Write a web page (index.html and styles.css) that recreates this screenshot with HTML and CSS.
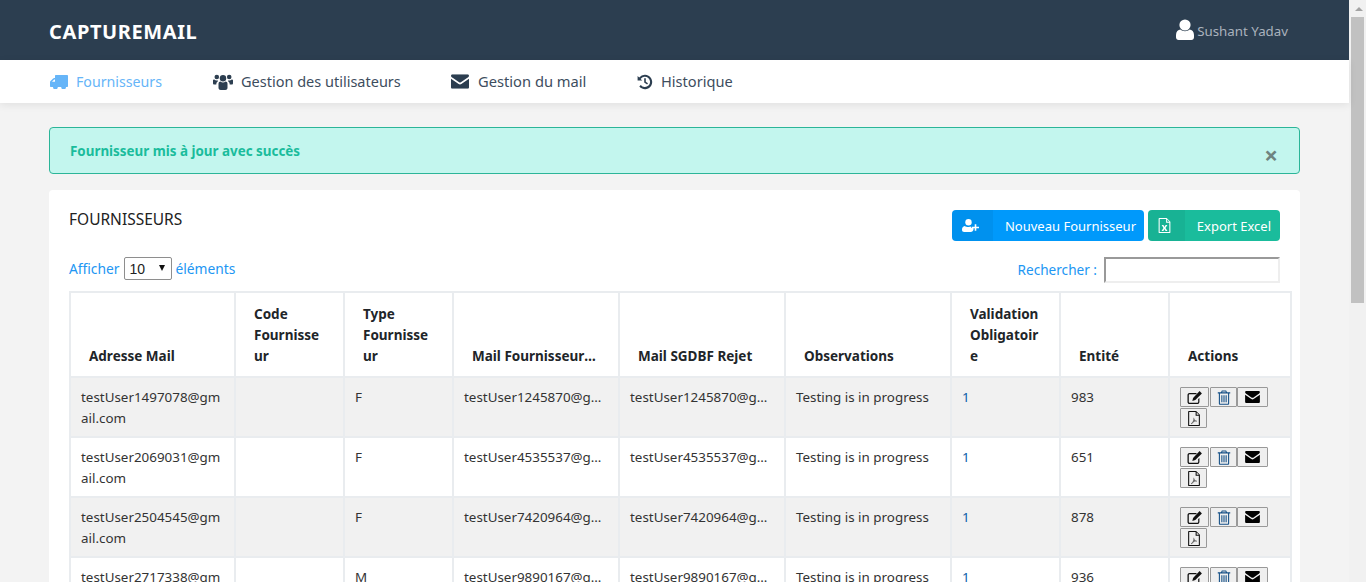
FILE: index.html
```html
<!DOCTYPE html>
<html lang="fr">
<head>
    <meta charset="UTF-8">
    <meta name="viewport" content="width=device-width, initial-scale=1.0">
    <title>CaptureMail</title>
    <link rel="stylesheet" href="styles.css">
</head>
<body>
    <svg class="icon-defs" width="0" height="0">
        <defs>
            <symbol id="i-edit" viewBox="0 0 16 14"><path d="M2.5 2.5h7.5l-1.2 1.2H2.8c-.6 0-1 .4-1 1v6.6c0 .6.4 1 1 1h7.4c.6 0 1-.4 1-1V8.6l1.2-1.2v4c0 1.2-1 2.1-2.1 2.1H2.6c-1.200 0-2.100-.9-2.100-2.100V4.600c0-1.200.9-2.100 2-2.100z"/><path d="M12.600.6l2.300 2.300-6.600 6.700-3 .8.800-3z"/></symbol>
            <symbol id="i-trash" viewBox="0 0 12 14"><path d="M4 .5h4l.8 1.700h3v1.100h-1v9.200c0 .8-.5 1.300-1.100 1.300H2.300c-.6 0-1.100-.5-1.100-1.300V3.300h-1V2.200h3zM4.600 1.500l-.4.7h3.600l-.4-.7zM2.200 3.300v9.200c0 .2.100.4.200.4h7.200c.1 0 .2-.2.2-.4V3.300z"/><path d="M3.500 5h1v6.500h-1zM5.500 5h1v6.500h-1zM7.500 5h1v6.500h-1z"/></symbol>
            <symbol id="i-mail" viewBox="0 0 16 13"><path d="M1.400 0h13.200C15.400 0 16 .6 16 1.400c0 .6-.4 1.100-.8 1.400L8.800 7.200c-.5.300-1.100.300-1.600 0L.8 2.800C.4 2.500 0 2 0 1.400 0 .6.600 0 1.400 0z"/><path d="M0 4.100l6.800 4.600c.7.500 1.700.500 2.400 0L16 4.100v7.500c0 .8-.6 1.400-1.400 1.400H1.400C.6 13 0 12.400 0 11.600z"/></symbol>
            <symbol id="i-pdf" viewBox="0 0 12 14"><path fill-rule="evenodd" d="M.5 0H8l3.500 3.500v9.700c0 .5-.3.800-.8.800H1.300c-.5 0-.8-.3-.8-.8V.8C.5.300.8 0 1.300 0zM1.500 1v12h9V4.500H7.500V1zM8.500 1.300v2.200h2.100z"/><path d="M6 6.200c.4 1.700 1.100 2.700 2.800 3l-.1.800c-1-.2-1.900-.1-2.900.3-.7 1-1.300 1.600-2.300 2l-.4-.6c.8-.5 1.500-1.300 2-2.400.4-1 .5-2 .4-3z" fill-opacity=".6"/></symbol>
        </defs>
    </svg>

    <div class="window">
        <div class="page">
            <header class="topbar">
                <div class="brand">CAPTUREMAIL</div>
                <div class="user">
                    <svg class="user-icon" viewBox="0 0 18 21"><circle cx="9" cy="6" r="5.600" fill="#fff"/><path d="M4.500 10.500c1 1 2.800 1.700 4.500 1.700s3.500-.7 4.500-1.700c2.500.3 4.500 2 4.500 5.500v2.300c0 1.500-1 2.700-2.700 2.700H2.700C1 21 0 19.800 0 18.300V16c0-3.500 2-5.200 4.500-5.500z" fill="#fff"/></svg>
                    <span>Sushant Yadav</span>
                </div>
            </header>

            <nav class="menu">
                <a class="menu-item active">
                    <svg class="menu-icon" viewBox="0 0 18 14"><path d="M6 0h11c.6 0 1 .4 1 1v10c0 .6-.4 1-1 1h-1a2.400 2.400 0 0 1-4.800 0H7.800A2.400 2.400 0 0 1 3 12H1c-.6 0-1-.4-1-1V7.200c0-.4.200-.8.500-1.100l2.600-2.600c.3-.3.700-.5 1.100-.5H5V1c0-.6.400-1 1-1zM2 6.800h3V4.600H4.200z"/><circle cx="5.400" cy="12" r="1.400"/><circle cx="13.600" cy="12" r="1.400"/></svg>
                    Fournisseurs
                </a>
                <a class="menu-item">
                    <svg class="menu-icon users" viewBox="0 0 20 16"><circle cx="10" cy="4.200" r="3.200"/><circle cx="3.800" cy="3" r="2.300"/><circle cx="16.200" cy="3" r="2.300"/><path d="M5.500 9.800C5.500 8.400 6.500 7.600 7.500 7.600c.7.600 1.500.9 2.500.9s1.800-.3 2.500-.9c1 0 2 .8 2 2.200v4c0 1.400-1 2.200-2.200 2.200H7.700c-1.200 0-2.200-.8-2.200-2.200z"/><path d="M0 6.500C0 5.800.5 5.500 1.300 5.500c.6.600 1.500.9 2.500.9.500 0 .9 0 1.300-.2-.3.500-.4 1-.5 1.500-1 .5-1.300 1.500-1.300 2.900H1.200C.500 10.600 0 10 0 9.300zM20 6.500c0-.7-.5-1-1.300-1-.6.600-1.500.9-2.500.9-.5 0-.9 0-1.300-.2.300.5.400 1 .5 1.500 1 .5 1.300 1.500 1.300 2.900h2.100c.7 0 1.200-.6 1.200-1.300z"/></svg>
                    Gestion des utilisateurs
                </a>
                <a class="menu-item">
                    <svg class="menu-icon mail" viewBox="0 0 16 13"><use href="#i-mail"/></svg>
                    Gestion du mail
                </a>
                <a class="menu-item">
                    <svg class="menu-icon history" viewBox="0 0 16 16"><path d="M8 .8a7.200 7.200 0 1 1-5.700 11.600l1.500-1.300A5.200 5.200 0 1 0 3.600 4.900L5.300 6.600H.6V1.900l1.600 1.600A7.200 7.200 0 0 1 8 .8z"/><path d="M7.200 4.300h1.600v3.400l2.200 1.600-.9 1.200-2.900-2.100z"/></svg>
                    Historique
                </a>
            </nav>

            <main class="content">
                <div class="alert">
                    <span>Fournisseur mis à jour avec succès</span>
                    <span class="alert-close">×</span>
                </div>

                <section class="card">
                    <div class="card-head">
                        <h2>FOURNISSEURS</h2>
                        <div class="card-actions">
                            <button class="btn btn-blue">
                                <span class="btn-icon"><svg width="17" height="13" viewBox="0 0 17 13" fill="#fff"><circle cx="6.500" cy="3.300" r="3.200"/><path d="M2.700 7c1 .6 2.400 1 3.800 1 1.200 0 2-.2 2.700-.5v1.300h2.300v1.800c-.3 1.400-1.300 2.400-2.700 2.400H2.200C.8 13 0 12 0 10.700 0 8.800 1 7.400 2.700 7z"/><path d="M12.700 5.200h1.600v2.500H17v1.600h-2.700v2.500h-1.600V9.300H10V7.700h2.700z"/></svg></span>
                                <span class="btn-label">Nouveau Fournisseur</span>
                            </button>
                            <button class="btn btn-green">
                                <span class="btn-icon"><svg width="13" height="15" viewBox="0 0 12 14" fill="#fff"><path fill-rule="evenodd" d="M.5 0H8l3.500 3.500v9.700c0 .5-.3.800-.8.800H1.300c-.5 0-.8-.3-.8-.8V.8C.5.300.8 0 1.300 0zM1.500 1v12h9V4.500H7.500V1zM8.500 1.300v2.200h2.100z"/><path d="M3.300 6.500h1.700L6 8.300l1-1.800h1.700L6.900 9.300l1.900 2.900H7L6 10.300l-1 1.900H3.200l1.900-2.900z"/></svg></span>
                                <span class="btn-label">Export Excel</span>
                            </button>
                        </div>
                    </div>

                    <div class="table-tools">
                        <label class="length">Afficher
                            <span class="fake-select">10<i class="caret"></i></span>
                            éléments</label>
                        <label class="search">Rechercher :
                            <input type="text" class="search-input">
                        </label>
                    </div>

                    <table class="grid">
                        <colgroup>
                            <col class="c-mail"><col class="c-code"><col class="c-type"><col class="c-long"><col class="c-long"><col class="c-long"><col class="c-valid"><col class="c-ent"><col class="c-act">
                        </colgroup>
                        <thead>
                            <tr>
                                <th>Adresse Mail</th>
                                <th>Code Fournisseur</th>
                                <th>Type Fournisseur</th>
                                <th class="cut">Mail FournisseurRejet</th>
                                <th class="cut">Mail SGDBF Rejet</th>
                                <th>Observations</th>
                                <th>Validation Obligatoire</th>
                                <th>Entité</th>
                                <th>Actions</th>
                            </tr>
                        </thead>
                        <tbody>
                            <tr>
                                <td>testUser1497078@gmail.com</td><td></td><td>F</td>
                                <td class="cut">testUser1245870@gmail.com</td><td class="cut">testUser1245870@gmail.com</td>
                                <td>Testing is in progress</td><td class="link">1</td><td>983</td>
                                <td class="actions">
                                    <button class="act a-edit"><svg><use href="#i-edit"/></svg></button><button class="act a-trash"><svg><use href="#i-trash"/></svg></button><button class="act a-mail"><svg><use href="#i-mail"/></svg></button><button class="act a-pdf"><svg><use href="#i-pdf"/></svg></button>
                                </td>
                            </tr>
                            <tr>
                                <td>testUser2069031@gmail.com</td><td></td><td>F</td>
                                <td class="cut">testUser4535537@gmail.com</td><td class="cut">testUser4535537@gmail.com</td>
                                <td>Testing is in progress</td><td class="link">1</td><td>651</td>
                                <td class="actions">
                                    <button class="act a-edit"><svg><use href="#i-edit"/></svg></button><button class="act a-trash"><svg><use href="#i-trash"/></svg></button><button class="act a-mail"><svg><use href="#i-mail"/></svg></button><button class="act a-pdf"><svg><use href="#i-pdf"/></svg></button>
                                </td>
                            </tr>
                            <tr>
                                <td>testUser2504545@gmail.com</td><td></td><td>F</td>
                                <td class="cut">testUser7420964@gmail.com</td><td class="cut">testUser7420964@gmail.com</td>
                                <td>Testing is in progress</td><td class="link">1</td><td>878</td>
                                <td class="actions">
                                    <button class="act a-edit"><svg><use href="#i-edit"/></svg></button><button class="act a-trash"><svg><use href="#i-trash"/></svg></button><button class="act a-mail"><svg><use href="#i-mail"/></svg></button><button class="act a-pdf"><svg><use href="#i-pdf"/></svg></button>
                                </td>
                            </tr>
                            <tr>
                                <td>testUser2717338@gmail.com</td><td></td><td>M</td>
                                <td class="cut">testUser9890167@gmail.com</td><td class="cut">testUser9890167@gmail.com</td>
                                <td>Testing is in progress</td><td class="link">1</td><td>936</td>
                                <td class="actions">
                                    <button class="act a-edit"><svg><use href="#i-edit"/></svg></button><button class="act a-trash"><svg><use href="#i-trash"/></svg></button><button class="act a-mail"><svg><use href="#i-mail"/></svg></button><button class="act a-pdf"><svg><use href="#i-pdf"/></svg></button>
                                </td>
                            </tr>
                        </tbody>
                    </table>
                </section>
            </main>
        </div>

        <div class="scrollbar">
            <div class="scroll-up"></div>
            <div class="scroll-thumb"></div>
        </div>
    </div>
</body>
</html>
```

FILE: styles.css
```css
* {
    box-sizing: border-box;
}
html, body {
    margin: 0;
    padding: 0;
    height: 100%;
    overflow: hidden;
}
body {
    font-family: "Noto Sans", "Open Sans", sans-serif;
    font-size: 13.5px;
    line-height: 21px;
    color: #2c3e50;
    background-color: #f3f3f3;
}
.icon-defs {
    display: block;
    height: 0;
}
.window {
    display: flex;
    height: 582px;
    overflow: hidden;
}
.page {
    width: 1349px;
    flex: none;
}

/* top bar */
.topbar {
    height: 60px;
    background-color: #2c3e50;
    display: flex;
    align-items: center;
    justify-content: space-between;
    padding: 0 61px 0 49px;
}
.brand {
    color: #fff;
    font-size: 20px;
    font-weight: 700;
    letter-spacing: .6px;
    padding-top: 2px;
}
.user {
    display: flex;
    align-items: flex-end;
    gap: 3px;
    color: #aab2bd;
    font-size: 13.3px;
}
.user-icon {
    width: 18px;
    height: 21px;
    margin-bottom: 2px;
}

/* menu */
.menu {
    height: 43px;
    background-color: #fff;
    display: flex;
    align-items: center;
    padding-left: 50px;
    box-shadow: 0 2px 8px rgba(0, 0, 0, .08);
    position: relative;
}
.menu-item {
    display: flex;
    align-items: center;
    font-size: 14.5px;
    color: #3d4d5e;
}
.menu-item:nth-child(1) {
    width: 163px;
    font-size: 14.2px;
}
.menu-item:nth-child(2) {
    width: 238px;
}
.menu-item:nth-child(3) {
    width: 186px;
    font-size: 14.7px;
}
.menu-item:nth-child(4) {
    font-size: 14.6px;
}
.menu-item.active {
    color: #66b5f8;
}
.menu-icon {
    width: 18px;
    height: 14px;
    margin-right: 8px;
    fill: #2c3e50;
}
.menu-item.active .menu-icon {
    fill: #66b5f8;
}
.menu-icon.users {
    width: 20px;
    height: 18px;
}
.menu-icon.mail {
    width: 18px;
    height: 15px;
    margin-right: 9px;
}
.menu-icon.history {
    width: 16px;
    height: 16px;
}

/* content */
.content {
    padding: 24px 49px 0;
}
.alert {
    height: 47px;
    background-color: #c3f6ee;
    border: 1px solid #2bb598;
    border-radius: 4px;
    padding: 13px 20px;
    display: flex;
    justify-content: space-between;
    color: #1abc9c;
    font-size: 13.4px;
    font-weight: 700;
}
.alert-close {
    font-size: 24px;
    font-weight: 700;
    color: #6f8480;
    margin-top: 3px;
    margin-right: 1px;
}
.card {
    margin-top: 16px;
    background-color: #fff;
    border-radius: 4px;
    padding: 20px;
}
.card-head {
    display: flex;
    justify-content: space-between;
    height: 47px;
}
.card-head h2 {
    margin: 0;
    font-size: 15.5px;
    font-weight: 400;
    line-height: 19px;
    color: #222;
}
.card-actions {
    display: flex;
    gap: 4px;
    height: 31px;
}
.btn {
    display: flex;
    padding: 0;
    border: 0;
    border-radius: 4px;
    overflow: hidden;
    color: #fff;
    font: inherit;
    font-size: 13px;
    height: 31px;
}
.btn-blue {
    width: 192px;
    background-color: #0099fb;
}
.btn-green {
    width: 132px;
    background-color: #1abc9c;
}
.btn-icon {
    display: flex;
    align-items: center;
    height: 100%;
    padding-left: 10px;
    background-color: rgba(0, 0, 0, .05);
}
.btn-blue .btn-icon {
    width: 41px;
}
.btn-green .btn-icon {
    width: 37px;
}
.btn-label {
    flex: 1;
    line-height: 33px;
    text-align: right;
    padding-right: 8px;
    white-space: nowrap;
}
.btn-green .btn-label {
    padding-right: 9px;
}
.table-tools {
    display: flex;
    justify-content: space-between;
    height: 35px;
    color: #2196f3;
    font-size: 13.6px;
}
.length {
    display: flex;
    align-items: flex-start;
    gap: 4px;
    height: 23px;
    font-size: 13.8px;
    line-height: 24px;
}
.fake-select {
    width: 48px;
    height: 23px;
    border: 1px solid #8e8e8e;
    border-radius: 2px;
    color: #222;
    font-family: "Liberation Sans", sans-serif;
    font-size: 14px;
    line-height: 23px;
    padding-left: 5px;
    position: relative;
}
.caret {
    position: absolute;
    right: 6px;
    top: 7px;
    border-left: 3.500px solid transparent;
    border-right: 3.500px solid transparent;
    border-top: 6px solid #111;
}
.search {
    display: flex;
    gap: 7px;
    height: 26px;
    line-height: 26px;
}
.search-input {
    width: 176px;
    height: 26px;
    border: 2px solid #eee;
    border-top-color: #999;
    border-left-color: #999;
    padding: 0;
    background-color: #fff;
}

/* table */
.grid {
    width: 1222px;
    table-layout: fixed;
    border-collapse: collapse;
    margin-top: -1px;
    border: 2px solid #e9ecef;
    color: #333;
}
.c-mail { width: 165px; }
.c-code, .c-type, .c-valid, .c-ent { width: 109px; }
.c-long { width: 166px; }
.c-act { width: 122px; }
.grid th {
    padding: 11px 18px 9px;
    border: 2px solid #e9ecef;
    border-bottom: 1px solid #111;
    text-align: left;
    vertical-align: bottom;
    font-size: 13.5px;
    font-weight: 700;
    color: #212529;
    overflow-wrap: break-word;
}
.grid td {
    padding: 9px 10px 7px;
    border: 2px solid #e9ecef;
    vertical-align: top;
    font-size: 13.4px;
    overflow-wrap: break-word;
}
.grid tbody tr:nth-child(odd) {
    background-color: #f1f1f1;
}
.grid .cut {
    white-space: nowrap;
    overflow: hidden;
    text-overflow: ellipsis;
}
.grid .link {
    color: #0d5fa8;
}
.actions {
    line-height: 0;
}
.act {
    display: inline-flex;
    align-items: center;
    justify-content: center;
    height: 20px;
    margin: 0 0 1px;
    padding: 0;
    background-color: #efefef;
    border: 1px solid #999;
    border-radius: 1px;
    vertical-align: top;
}
.act svg {
    width: 16px;
    height: 15px;
    fill: #111;
}
.a-edit { width: 29px; margin-right: 1px; }
.a-trash { width: 27px; }
.a-trash svg { fill: #144f86; }
.a-mail { width: 31px; }
.a-mail svg { width: 15px; height: 12px; fill: #000; }
.a-pdf { width: 27px; }

/* fake browser scrollbar */
.scrollbar {
    width: 17px;
    flex: none;
    background-color: #f1f1f1;
    padding-left: 2px;
}
.scroll-up {
    height: 17px;
    position: relative;
}
.scroll-up::after {
    content: "";
    position: absolute;
    left: 4px;
    top: 7px;
    border-left: 4px solid transparent;
    border-right: 4px solid transparent;
    border-bottom: 4px solid #a3a3a3;
}
.scroll-thumb {
    width: 13px;
    height: 286px;
    background-color: #c1c1c1;
}
```
